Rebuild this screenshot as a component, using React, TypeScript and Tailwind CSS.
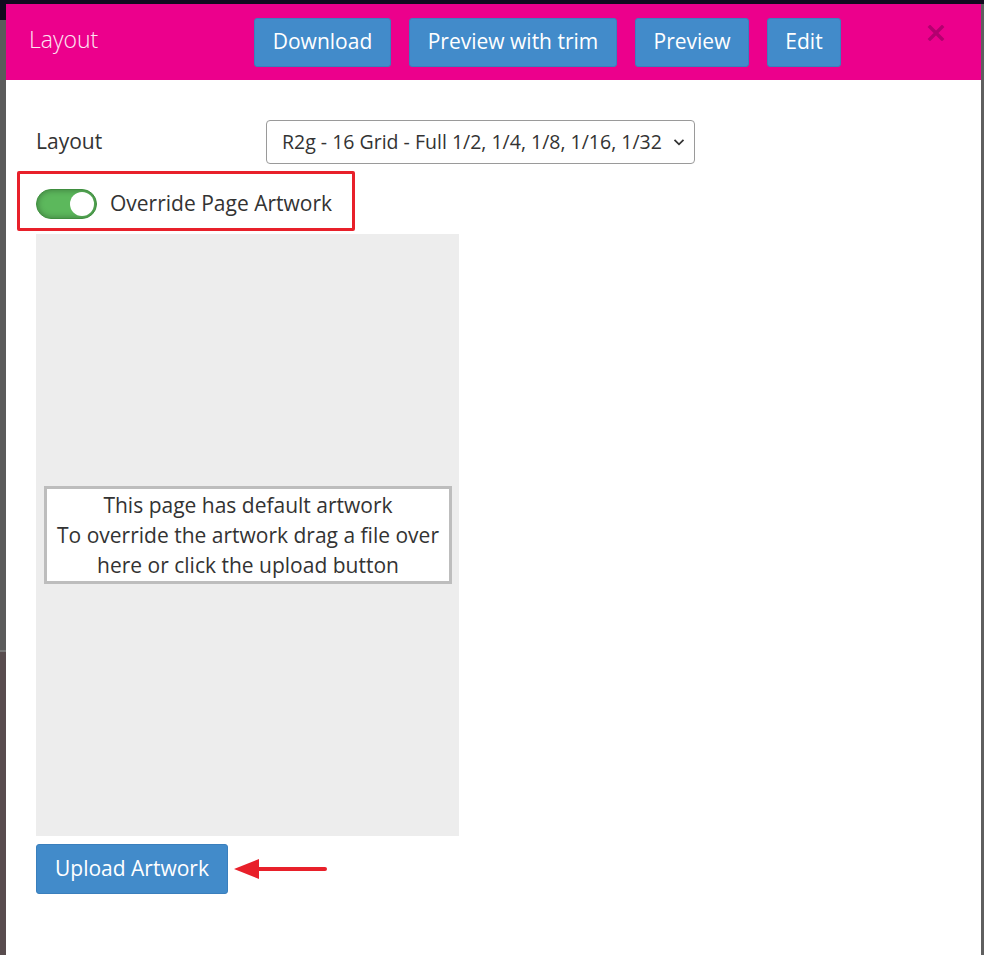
import { useState } from "react";

const font = { fontFamily: '"Open Sans", "Liberation Sans", sans-serif' };

function HeaderButton({ label, width }: { label: string; width: string }) {
  return (
    <button
      className={`${width} h-[49px] rounded-[3px] border border-[#3a7fbd] bg-[#428bca] text-[21px] text-white flex items-center justify-center`}
    >
      {label}
    </button>
  );
}

export default function App() {
  const [override, setOverride] = useState(true);

  return (
    <div className="h-[955px] w-[984px] overflow-hidden bg-[#5b5b5b] flex flex-col" style={font}>
      {/* backdrop strip at the top */}
      <div className="h-[4px] shrink-0 bg-[#120a1e]" />
      <div className="flex flex-1 min-h-0">
        <div className="w-[6px] shrink-0 flex flex-col">
          <div className="h-[16px] bg-[#120a1e]" />
          <div className="h-[630px] bg-[#5b5b5b]" />
          <div className="h-[2px] bg-[#777]" />
          <div className="flex-1 bg-[#584c4e]" />
        </div>

        {/* modal */}
        <div className="w-[975px] shrink-0 bg-white flex flex-col">
          <div className="h-[76px] shrink-0 bg-[#ec008c] flex items-center pl-[23px] pr-[35px]">
            <h1 className="w-[225px] text-[23px] font-light text-[#fde6f2] -mt-[5px]">Layout</h1>
            <div className="flex items-center gap-[18px]">
              <HeaderButton label="Download" width="w-[137px]" />
              <HeaderButton label="Preview with trim" width="w-[208px]" />
              <HeaderButton label="Preview" width="w-[114px]" />
              <HeaderButton label="Edit" width="w-[74px]" />
            </div>
            <div className="flex-1" />
            <button className="w-[20px] h-[20px] flex items-center justify-center -mt-[18px]" aria-label="Close">
              <svg width="18" height="16" viewBox="0 0 18 16">
                <path d="M3 2 L15 14 M15 2 L3 14" stroke="#b3006f" strokeWidth="3.4" strokeLinecap="square" />
              </svg>
            </button>
          </div>

          <div className="flex-1 pt-[40px] pl-[30px]">
            <div className="flex items-center h-[44px]">
              <label className="w-[230px] text-[21px] text-[#333]">Layout</label>
              <div className="w-[429px] h-[44px] rounded-[4px] border border-[#9a9a9a] bg-white flex items-center pl-[15px] pr-[8px]">
                <span className="flex-1 text-[19.5px] text-[#333] whitespace-nowrap">
                  R2g - 16 Grid - Full 1/2, 1/4, 1/8, 1/16, 1/32
                </span>
                <svg width="14" height="14" viewBox="0 0 14 14">
                  <path d="M2.5 4.8 L7 9.3 L11.5 4.8" fill="none" stroke="#333" strokeWidth="1.8" />
                </svg>
              </div>
            </div>

            <div className="mt-[7px] ml-[-19px] w-[338px] h-[60px] rounded-[2px] border-[3px] border-[#e8202a] flex items-center pl-[16px] pt-[5px]">
              <button
                onClick={() => setOverride(!override)}
                className={`relative w-[61px] h-[30px] rounded-full border ${override ? "border-[#3f8e3f] bg-[#5cb85c]" : "border-[#bbb] bg-[#ddd]"} shadow-[inset_0_0_6px_rgba(0,0,0,0.35)]`}
              >
                <span
                  className={`absolute top-[2px] ${override ? "right-[2px]" : "left-[2px]"} w-[24px] h-[24px] rounded-full bg-white`}
                />
              </button>
              <span className="ml-[13px] text-[21px] text-[#333]">Override Page Artwork</span>
            </div>

            <div className="mt-[3px] w-[423px] h-[602px] bg-[#ededed] flex items-center pl-[8px] pr-[7px]">
              <div className="w-full border-[3px] border-[#bdbdbd] bg-white text-center text-[21px] leading-[30px] text-[#333] py-[1px]">
                This page has default artwork
                <br />
                To override the artwork drag a file over
                <br />
                here or click the upload button
              </div>
            </div>

            <div className="mt-[8px] flex items-center gap-[5px]">
              <button className="w-[192px] h-[50px] rounded-[3px] border border-[#3a7fbd] bg-[#428bca] text-[21px] text-white">
                Upload Artwork
              </button>
              <svg width="96" height="24" viewBox="0 0 96 24">
                <path d="M24 12 L92 12" stroke="#e8202a" strokeWidth="4" strokeLinecap="round" />
                <path d="M1 12 L26 2 L26 22 Z" fill="#e8202a" />
              </svg>
            </div>
          </div>
        </div>

        <div className="flex-1 bg-[#5f5f5f]" />
      </div>
    </div>
  );
}
